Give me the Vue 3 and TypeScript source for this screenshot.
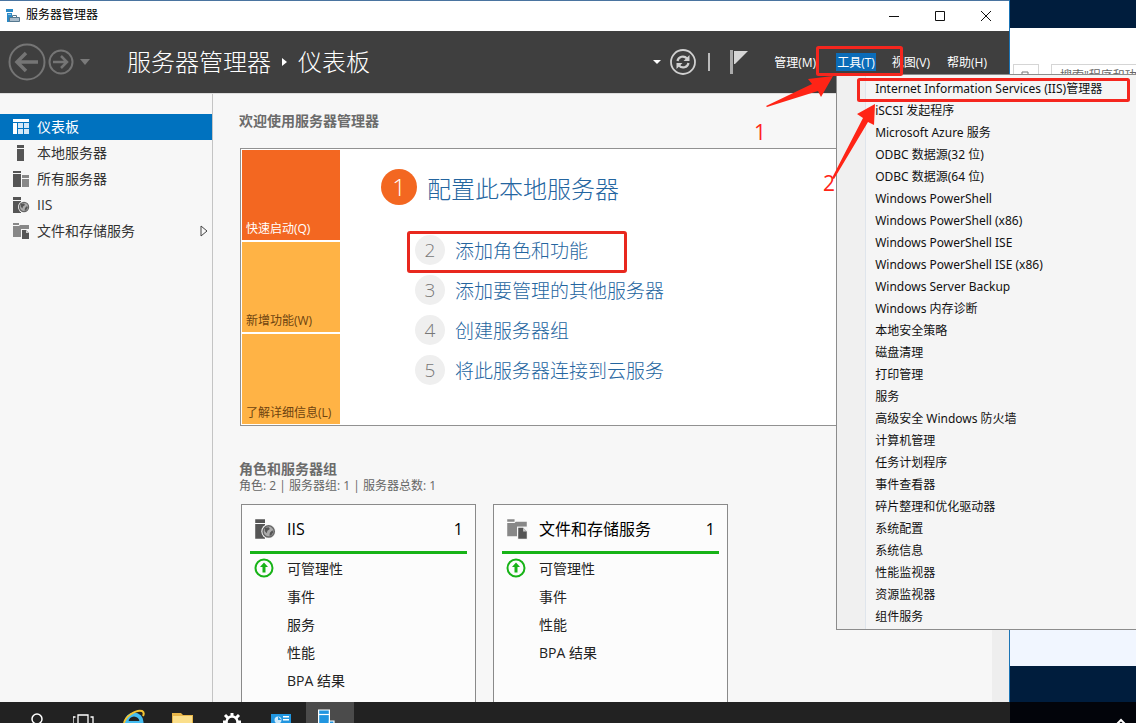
<script setup lang="ts">
import { ref } from 'vue'

interface NavItem { label: string; icon: string; expandable?: boolean }
interface RoleCard { title: string; icon: string; count: number; rows: string[] }

const navItems: NavItem[] = [
  { label: '仪表板', icon: 'dashboard' },
  { label: '本地服务器', icon: 'server' },
  { label: '所有服务器', icon: 'servers' },
  { label: 'IIS', icon: 'iis' },
  { label: '文件和存储服务', icon: 'files', expandable: true },
]
const selected = ref('仪表板')

const tiles = [
  { label: '快速启动(Q)', primary: true },
  { label: '新增功能(W)', primary: false },
  { label: '了解详细信息(L)', primary: false },
]

const steps = ['添加角色和功能', '添加要管理的其他服务器', '创建服务器组', '将此服务器连接到云服务']

const cards: RoleCard[] = [
  { title: 'IIS', icon: 'iis', count: 1, rows: ['可管理性', '事件', '服务', '性能', 'BPA 结果'] },
  { title: '文件和存储服务', icon: 'files', count: 1, rows: ['可管理性', '事件', '性能', 'BPA 结果'] },
]

const tools = [
  'Internet Information Services (IIS)管理器',
  'iSCSI 发起程序',
  'Microsoft Azure 服务',
  'ODBC 数据源(32 位)',
  'ODBC 数据源(64 位)',
  'Windows PowerShell',
  'Windows PowerShell (x86)',
  'Windows PowerShell ISE',
  'Windows PowerShell ISE (x86)',
  'Windows Server Backup',
  'Windows 内存诊断',
  '本地安全策略',
  '磁盘清理',
  '打印管理',
  '服务',
  '高级安全 Windows 防火墙',
  '计算机管理',
  '任务计划程序',
  '事件查看器',
  '碎片整理和优化驱动器',
  '系统配置',
  '系统信息',
  '性能监视器',
  '资源监视器',
  '组件服务',
]
</script>

<template>
  <div class="desktop">
    <svg class="defs" aria-hidden="true">
      <symbol id="i-dashboard" viewBox="0 0 18 18">
        <path fill="#fff" d="M1 1h16v3H1zM1 5h4v11H1z" />
        <path fill="#d5e8f7" d="M6 5h5v5H6zM12 5h5v5h-5zM6 11h5v5H6zM12 11h5v5h-5z" />
      </symbol>
      <symbol id="i-server" viewBox="0 0 18 18">
        <path fill="#555" d="M5 1h7v3H5zM5 5h7v12H5z" />
      </symbol>
      <symbol id="i-servers" viewBox="0 0 18 18">
        <path fill="#555" d="M1 1h8v2H1zM1 4h8v13H1z" />
        <path fill="#888" d="M10 5h7v3h-7zM10 9h7v8h-7z" />
      </symbol>
      <symbol id="i-iis" viewBox="0 0 18 18">
        <path fill="#555" d="M1 1h8v3H1zM1 5h8v12H1z" />
        <circle cx="12" cy="11" r="6" fill="#f7f7f7" />
        <circle cx="12" cy="11" r="4.6" fill="#aaa" stroke="#666" stroke-width="1.2" />
        <path fill="#555" d="M9 8l3-.5 1 1.6-2 1.4-.6 2-1.6-1.8zM13 12l2-2 .8 1.6-1.8 2.8-1.4.2z" />
      </symbol>
      <symbol id="i-files" viewBox="0 0 18 18">
        <path fill="#888" d="M1 1h6v2H1zM1 4h6l1-1h9v6H1zM1 5h9v10H1z" />
        <path fill="#f7f7f7" d="M9 7h9v11H9z" />
        <path fill="#555" d="M10 8h4l3 3v6h-7z" />
        <path fill="#ccc" d="M14 8l3 3h-3z" />
      </symbol>
    </svg>

    <div class="stage">
      <div class="window">
        <header class="titlebar">
          <svg class="app-icon" viewBox="0 0 16 16" aria-hidden="true">
            <path fill="#2b8ac6" d="M1 1h7v3H1zM2 5h5v9H2z" />
            <path fill="#8fc6e8" d="M3 6h3v1H3z" />
            <path fill="#a9bccb" stroke="#55788f" stroke-width="1" d="M4.500 9.500h10v4h-10z" />
            <path fill="none" stroke="#55788f" d="M7.500 9V7.500h4V9" />
          </svg>
          <span class="app-name">服务器管理器</span>
          <div class="controls">
            <button type="button" aria-label="最小化"><svg viewBox="0 0 12 12"><path d="M1 6.500h10" /></svg></button>
            <button type="button" aria-label="最大化"><svg viewBox="0 0 12 12"><path d="M1.500 1.500h9v9h-9z" /></svg></button>
            <button type="button" aria-label="关闭"><svg viewBox="0 0 12 12"><path d="M1 1l10 10M11 1L1 11" /></svg></button>
          </div>
        </header>

        <div class="header">
          <button type="button" class="back" aria-label="后退">
            <svg viewBox="0 0 38 38"><circle cx="19" cy="19" r="17.500" stroke-width="2" /><path stroke-width="3.500" d="M30 19H10M18 10l-9 9 9 9" /></svg>
          </button>
          <button type="button" class="forward" aria-label="前进">
            <svg viewBox="0 0 26 26"><circle cx="13" cy="13" r="11.500" stroke-width="2" /><path stroke-width="2.500" d="M5 13h14M13 7l6 6-6 6" /></svg>
          </button>
          <svg class="history" viewBox="0 0 10 6" aria-hidden="true"><path fill="#7a7a7a" d="M0 0h10L5 6z" /></svg>
          <h1 class="crumbs">
            <span>服务器管理器</span>
            <svg viewBox="0 0 5 8" aria-hidden="true"><path fill="#fff" d="M0 0l5 4-5 4z" /></svg>
            <span>仪表板</span>
          </h1>
          <div class="tools">
            <svg class="drop" viewBox="0 0 8 5" aria-hidden="true"><path fill="#fff" d="M0 0h8L4 4z" /></svg>
            <button type="button" class="refresh" aria-label="刷新">
              <svg viewBox="0 0 26 26" fill="none" stroke="#d0d0d0">
                <circle cx="13" cy="13" r="12" stroke-width="1.800" />
                <path stroke-width="2.200" d="M7.500 12c.8-4.500 6.500-6 9.500-2.500M18.500 14c-.8 4.500-6.500 6-9.500 2.500" />
                <path fill="#d0d0d0" stroke="none" d="M19.500 6v6h-6zM6.500 20v-6h6z" />
              </svg>
            </button>
            <span class="divider"></span>
            <button type="button" class="flag" aria-label="通知">
              <svg viewBox="0 0 18 24"><path fill="#aaa" d="M0 0h3v24H0z" /><path fill="#d6d6d6" d="M4 1h14L5 14H4z" /></svg>
            </button>
            <nav class="menubar">
              <button type="button" class="manage">管理(M)</button>
              <div class="tools-menu">
                <button type="button" class="open">工具(T)</button>
                <ul class="menu">
                  <li v-for="tool in tools" :key="tool"><button type="button">{{ tool }}</button></li>
                </ul>
              </div>
              <button type="button">视图(V)</button>
              <button type="button">帮助(H)</button>
            </nav>
          </div>
        </div>

        <div class="body">
          <nav class="sidebar">
            <button
              v-for="item in navItems"
              :key="item.label"
              type="button"
              :class="{ active: selected === item.label }"
              @click="selected = item.label"
            >
              <svg class="nav-icon" aria-hidden="true"><use :href="'#i-' + item.icon" /></svg>
              <span>{{ item.label }}</span>
              <svg v-if="item.expandable" class="expand" viewBox="0 0 8 12" aria-hidden="true"><path d="M1 1l6 5-6 5z" /></svg>
            </button>
          </nav>

          <main class="main">
            <h2>欢迎使用服务器管理器</h2>
            <section class="welcome">
              <div class="tiles">
                <button v-for="tile in tiles" :key="tile.label" type="button" :class="{ primary: tile.primary }">{{ tile.label }}</button>
              </div>
              <div class="steps">
                <a href="#" class="step first"><span class="num">1</span>配置此本地服务器</a>
                <a v-for="(step, i) in steps" :key="step" href="#" class="step" :class="{ marked: i === 0 }">
                  <span class="num">{{ i + 2 }}</span>{{ step }}
                </a>
              </div>
            </section>

            <h2>角色和服务器组</h2>
            <p class="summary">角色: 2 | 服务器组: 1 | 服务器总数: 1</p>
            <div class="cards">
              <section v-for="card in cards" :key="card.title" class="card">
                <h3>
                  <svg class="card-icon" aria-hidden="true"><use :href="'#i-' + card.icon" /></svg>
                  <span>{{ card.title }}</span>
                  <span class="count">{{ card.count }}</span>
                </h3>
                <ul>
                  <li v-for="(row, i) in card.rows" :key="row">
                    <svg v-if="i === 0" class="ok" viewBox="0 0 20 20" aria-hidden="true">
                      <circle cx="10" cy="10" r="8.500" fill="none" stroke="#17b317" stroke-width="2" />
                      <path fill="#17b317" d="M10 4.500l4 4.500h-2.500v5.500h-3V9H6z" />
                    </svg>
                    <a href="#">{{ row }}</a>
                  </li>
                </ul>
              </section>
            </div>
          </main>
          <div class="scroll-track"></div>
        </div>
      </div>

      <aside class="behind">
        <div class="behind-window">
          <div class="behind-bar">
            <button type="button" aria-label="刷新">
              <svg viewBox="0 0 12 12" aria-hidden="true"><path d="M2 11V2h6v9M5 6h6M8 9h3" /></svg>
            </button>
            <input type="text" aria-label="搜索" placeholder="搜索&quot;程序和功能&quot;" />
          </div>
        </div>
      </aside>

      <svg class="marks" viewBox="740 0 396 210" aria-hidden="true">
        <g fill="none" stroke="#f5261e" stroke-width="3">
          <rect x="817.500" y="47.500" width="84" height="27" rx="1" />
          <rect x="858.500" y="79.500" width="270" height="21" rx="1" />
        </g>
        <path fill="#ff2416" d="M766 106L812 84l-4-5 25-3-12 21-3-6-51 16z" />
        <path fill="#ff2416" d="M832 178L863 118l-6-4 18-10-1 21-6-3-34 57z" />
        <g class="mark-text" fill="#ff2416">
          <text x="754" y="140">1</text>
          <text x="823" y="191">2</text>
        </g>
      </svg>
    </div>

    <footer class="taskbar">
      <button type="button" aria-label="搜索"><svg viewBox="0 0 24 21"><circle cx="13" cy="17" r="5" fill="none" stroke="#fff" stroke-width="1.500" /></svg></button>
      <button type="button" aria-label="任务视图"><svg viewBox="0 0 24 21"><path fill="none" stroke="#fff" stroke-width="1.300" d="M5 21v-8h10v8M0 21v-6h2.500M20 21v-6h-2.500" /></svg></button>
      <button type="button" aria-label="Internet Explorer">
        <svg viewBox="0 0 24 21"><circle cx="12" cy="20" r="7.500" fill="none" stroke="#45bdf0" stroke-width="4" /><path fill="#45bdf0" d="M6 19h13v2H6z" /><path fill="none" stroke="#f5c532" stroke-width="2" d="M2 21c1-6 12-14 18-12 2 1 2 3 1 5" /></svg>
      </button>
      <button type="button" aria-label="文件资源管理器"><svg viewBox="0 0 24 21"><path fill="#e8b64a" d="M1 11h9l2 2h10v8H1z" /><path fill="#fbdf8b" d="M2 14h19v7H2z" /></svg></button>
      <button type="button" aria-label="设置">
        <svg viewBox="0 0 24 21"><circle cx="12" cy="20" r="5.500" fill="none" stroke="#fff" stroke-width="2.500" /><path stroke="#fff" stroke-width="3" d="M12 15v-4M8 16l-3-3M16 16l3-3M6 20H3M18 20h3" /></svg>
      </button>
      <button type="button" aria-label="控制面板">
        <svg viewBox="0 0 24 21"><path fill="#2196e0" d="M2 12h20v9H2z" /><circle cx="9" cy="18" r="3.500" fill="#cdeafc" /><path fill="#2196e0" d="M9 14.500V18h3.500z" /><path fill="#fff" d="M14 14h6v1.500h-6zM14 17h6v1.500h-6z" /></svg>
      </button>
      <button type="button" class="running" aria-label="服务器管理器">
        <svg viewBox="0 0 24 21"><path fill="#2196e0" stroke="#fff" stroke-width="1.200" d="M.6 8h10.800v16H.6z" /><path stroke="#fff" stroke-width="1.200" d="M.6 12.500h10.800" /><path fill="#2196e0" stroke="#fff" stroke-width="1.200" d="M11.400 19h4.600v4h-4.600z" /></svg>
      </button>
      <div class="tray">
        <button type="button" aria-label="显示隐藏的图标"><svg viewBox="0 0 24 21"><path fill="none" stroke="#fff" stroke-width="2" d="M8 22l4-4 4 4" /></svg></button>
      </div>
    </footer>
  </div>
</template>

<style>
body {
  margin: 0;
  background: #001a38;
}
</style>

<style scoped>
.desktop {
  display: flex;
  flex-direction: column;
  height: 100vh;
  overflow: hidden;
  font-family: "Open Sans", "Noto Sans CJK SC", sans-serif;
  font-size: 12px;
  color: #111;
}
.defs {
  position: absolute;
  width: 0;
  height: 0;
}
button {
  margin: 0;
  padding: 0;
  border: 0;
  background: none;
  font: inherit;
  color: inherit;
  text-align: left;
  white-space: nowrap;
}
a {
  color: inherit;
  text-decoration: none;
}
h1, h2, h3, p, ul {
  margin: 0;
  padding: 0;
  font-weight: 400;
  list-style: none;
}
svg {
  display: block;
  flex: none;
}
.stage {
  position: relative;
  display: flex;
  flex: 1;
  min-height: 0;
}
.window {
  position: relative;
  z-index: 1;
  display: flex;
  flex: 1;
  flex-direction: column;
  min-width: 0;
  border-right: 1px solid #1b74b5;
}
.titlebar {
  display: flex;
  align-items: center;
  height: 30px;
  padding-left: 5px;
  border-top: 1px solid #4a74a0;
  background: #fff;
}
.app-icon {
  width: 16px;
  height: 16px;
}
.app-name {
  margin-left: 5px;
  line-height: 16px;
  padding-bottom: 2px;
  color: #000;
}
.controls {
  display: flex;
  margin-left: auto;
}
.controls button {
  display: flex;
  align-items: center;
  justify-content: center;
  width: 46px;
  height: 30px;
}
.controls svg {
  width: 12px;
  height: 12px;
  fill: none;
  stroke: #111;
}
.header {
  display: flex;
  align-items: center;
  height: 62px;
  padding-left: 8px;
  background: #3f3f3f;
  color: #fff;
}
.back svg {
  width: 38px;
  height: 38px;
}
.forward {
  margin-left: 2px;
}
.forward svg {
  width: 26px;
  height: 26px;
}
.back svg, .forward svg {
  fill: none;
  stroke: #757575;
}
.history {
  width: 10px;
  height: 6px;
  margin-left: 6px;
}
.crumbs {
  display: flex;
  align-items: center;
  gap: 11px;
  margin-left: 37px;
  font-size: 24px;
  font-weight: 300;
  line-height: 32px;
}
.crumbs svg {
  width: 5px;
  height: 8px;
}
.tools {
  display: flex;
  align-items: center;
  margin-left: auto;
  padding-right: 21px;
}
.drop {
  width: 8px;
  height: 5px;
}
.refresh {
  margin-left: 9px;
}
.refresh svg {
  width: 26px;
  height: 26px;
}
.divider {
  width: 2px;
  height: 18px;
  margin-left: 12px;
  background: #bbb;
}
.flag {
  margin-left: 20px;
}
.flag svg {
  width: 18px;
  height: 24px;
}
.menubar {
  display: flex;
  align-items: center;
  gap: 15px;
  margin-left: 25px;
}
.menubar > button, .open {
  display: block;
  height: 18px;
  padding: 0 1px;
  line-height: 20px;
}
.menubar > .manage {
  padding-right: 5px;
}
.open {
  background: #0b6cb8;
}
.tools-menu {
  position: relative;
}
.menu {
  position: absolute;
  top: 21px;
  left: 0;
  z-index: 2;
  width: 310px;
  padding: 3px 0 1px;
  border: 1px solid #8c8c8c;
  background: linear-gradient(90deg, #f0f0f0 28px, #dfe5ec 28px, #dfe5ec 29px, #f5f5f5 29px);
  font-family: "Noto Sans", "Noto Sans CJK SC", sans-serif;
  color: #111;
}
.menu button {
  display: block;
  width: 100%;
  height: 22px;
  padding-left: 38px;
  line-height: 22px;
}
.body {
  display: flex;
  flex: 1;
  min-height: 0;
  overflow: hidden;
  border-top: 1px solid #ddd;
  background: #f7f7f7;
}
.sidebar {
  display: flex;
  flex: none;
  flex-direction: column;
  width: 212px;
  padding-top: 20px;
  border-right: 1px solid #c4c4c4;
}
.sidebar button {
  display: flex;
  align-items: center;
  height: 26px;
  padding: 0 4px 0 12px;
  font-size: 14px;
  line-height: 26px;
  color: #333;
}
.sidebar .active {
  background: #0072bf;
  color: #fff;
}
.nav-icon {
  width: 18px;
  height: 18px;
  margin-right: 7px;
}
.expand {
  width: 8px;
  height: 12px;
  margin-left: auto;
  fill: none;
  stroke: #444;
}
.main {
  flex: 1;
  min-width: 0;
  padding: 17px 0 0 26px;
}
h2 {
  font-size: 14px;
  font-weight: 700;
  line-height: 20px;
  color: #6b6b6b;
}
.welcome {
  display: flex;
  margin: 17px 10px 33px 1px;
  padding: 1px;
  border: 1px solid #919191;
  background: #fff;
}
.tiles {
  display: grid;
  grid-template-rows: repeat(3, 90px);
  gap: 2px;
  width: 98px;
}
.tiles button {
  display: flex;
  align-items: flex-end;
  padding: 0 0 2px 4px;
  background: #ffb345;
  line-height: 18px;
  color: #6d4310;
}
.tiles .primary {
  background: #f36721;
  color: #fff;
}
.steps {
  display: flex;
  flex-direction: column;
  align-items: flex-start;
  padding: 19px 0 0 41px;
}
.step {
  position: relative;
  display: flex;
  align-items: center;
  gap: 10px;
  height: 40px;
  margin-left: 34px;
  font-size: 19px;
  font-weight: 300;
  color: #24659f;
}
.first {
  height: 36px;
  margin: 0 0 25px;
  font-size: 24px;
}
.num {
  width: 30px;
  border-radius: 50%;
  background: #efefef;
  line-height: 30px;
  text-align: center;
  color: #777;
}
.first .num {
  width: 36px;
  background: #f36721;
  line-height: 36px;
  color: #fff;
}
.marked::after {
  content: "";
  position: absolute;
  inset: 1px -39px -3px -8px;
  border: 3px solid #e8281e;
  border-radius: 3px;
}
.summary {
  line-height: 14px;
  color: #666;
}
.cards {
  display: flex;
  gap: 17px;
  margin: 11px 0 0 2px;
}
.card {
  width: 217px;
  height: 260px;
  padding: 0 8px;
  border: 1px solid #8a8a8a;
  background: #fcfcfc;
}
h3 {
  display: flex;
  align-items: center;
  height: 44px;
  padding: 2px 4px 0;
  border-bottom: 3px solid #17b317;
  font-size: 16px;
  line-height: 44px;
  color: #000;
}
.card-icon {
  width: 22px;
  height: 22px;
  margin-right: 11px;
}
.count {
  margin-left: auto;
}
.card li {
  display: flex;
  align-items: center;
  height: 28px;
  font-size: 14px;
  color: #222;
}
.ok {
  width: 20px;
  height: 20px;
  margin: 0 13px 0 4px;
}
.card li:not(:first-child) {
  padding-left: 37px;
}
.scroll-track {
  width: 17px;
  background: #eee;
}
.behind {
  display: flex;
  flex: none;
  width: 126px;
  padding: 28px 0 36px;
  box-sizing: border-box;
  background: #001d3d;
}
.behind-window {
  flex: 1;
  min-width: 0;
  background: linear-gradient(#fff 200px, #f1f6ff 400px);
}
.behind-bar {
  display: flex;
  gap: 12px;
  padding: 36px 0 0 3px;
}
.behind-bar button {
  display: flex;
  flex: none;
  justify-content: center;
  width: 26px;
  padding-top: 5px;
  box-sizing: border-box;
  border: 1px solid #d5d5d5;
}
.behind-bar svg {
  width: 12px;
  height: 12px;
  fill: none;
  stroke: #777;
}
.behind-bar input {
  flex: none;
  width: 120px;
  height: 22px;
  box-sizing: border-box;
  padding: 0 8px;
  border: 1px solid #d5d5d5;
  font: inherit;
}
.behind-bar input::placeholder {
  color: #666;
}
.marks {
  position: absolute;
  top: 0;
  right: 0;
  z-index: 3;
  width: 396px;
  height: 210px;
  pointer-events: none;
}
.mark-text {
  font-size: 21px;
}
.taskbar {
  display: flex;
  flex: none;
  gap: 1px;
  height: 21px;
  padding-left: 12px;
  background: #222;
}
.taskbar > button {
  display: flex;
  justify-content: center;
  width: 48px;
}
.taskbar svg {
  width: 24px;
  height: 21px;
}
.taskbar .running {
  background: #4b4b4b;
}
.tray {
  display: flex;
  justify-content: flex-end;
  width: 126px;
  margin-left: auto;
  padding-right: 3px;
  box-sizing: border-box;
  background: #02040a;
}
</style>
